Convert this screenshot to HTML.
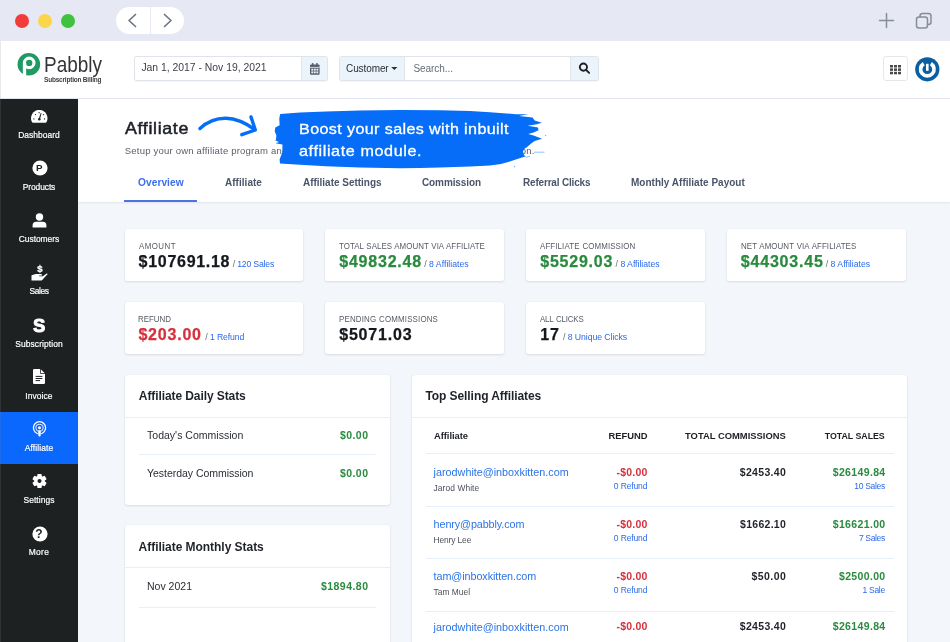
<!DOCTYPE html>
<html lang="en">
<head>
<meta charset="utf-8">
<title>Pabbly Subscription Billing - Affiliate</title>
<style>
*{box-sizing:border-box;margin:0;padding:0}
html,body{width:950px;height:642px;overflow:hidden;background:#f3f6fa;font-family:"Liberation Sans",sans-serif;color:#1f2329}
.abs{position:absolute}
#win{will-change:transform;position:relative;width:950px;height:642px;overflow:hidden;background:#f3f6fa}
/* title bar */
#tbar{left:0;top:0;width:950px;height:41px;background:#e6e8f3}
.dot{width:14px;height:14px;border-radius:50%;top:14px}
#pill{left:116px;top:7px;width:68px;height:27px;border-radius:14px;background:#fff}
#pill i{position:absolute;left:34px;top:0;width:1px;height:27px;background:#e6e8f3}
/* header */
#hdr{left:0;top:41px;width:950px;height:58px;background:#fff;border-bottom:1px solid #e3e6f2}
.inp{border:1px solid #dfe3ea;border-radius:2.500px;box-shadow:0 1px 1px rgba(60,80,110,.06);background:#fff;height:25px;top:56px}
.lb{background:#ebf3fb}
/* sidebar */
#side{left:0;top:99px;width:78px;height:543px;background:#1e2122}
.si{position:absolute;left:0;width:78px;height:52.2px;color:#fff;text-align:center}
.si svg{position:absolute}
.si.act{background:#0a68ff}
/* page head */
#phead{left:78px;top:99px;width:872px;height:103px;background:#fff;box-shadow:0 1px 2px rgba(0,0,0,.08)}
/* cards */
.card{position:absolute;width:178.700px;height:52px;background:#fff;border-radius:2.500px;box-shadow:0 1px 2.500px rgba(30,40,60,.11),0 0 1px rgba(30,40,60,.09)}
/* panels */
.panel{position:absolute;background:#fff;border-radius:3px;box-shadow:0 1px 2.500px rgba(30,40,60,.11),0 0 1px rgba(30,40,60,.09)}
.hl{position:absolute;height:1px;background:#e7f0fa}
.t{position:absolute;white-space:nowrap}
</style>
</head>
<body>
<div id="win">
  <div id="tbar" class="abs">
    <div class="abs dot" style="left:15px;background:#f23b3b"></div>
    <div class="abs dot" style="left:38px;background:#fbd54a"></div>
    <div class="abs dot" style="left:61px;background:#3fc33f"></div>
    <div id="pill" class="abs"><i></i>
      <svg class="abs" style="left:0;top:0" width="68" height="27" viewBox="0 0 68 27" fill="none" stroke="#6d7482" stroke-width="1.700" stroke-linecap="round" stroke-linejoin="round"><path d="M19.5 7.5 L13 13.5 L19.5 19.5"/><path d="M48.5 7.5 L55 13.5 L48.5 19.5"/></svg>
    </div>
    <svg class="abs" style="left:876px;top:10px" width="60" height="22" viewBox="0 0 60 22" fill="none" stroke="#888d9a" stroke-width="1.500" stroke-linecap="round"><path d="M10.5 3.5v14M3.5 10.5h14"/><rect x="40.5" y="7" width="11" height="11" rx="2.5"/><path d="M44 7V6a2.5 2.5 0 0 1 2.5-2.5h6A2.5 2.5 0 0 1 55 6v6a2.5 2.5 0 0 1-2.5 2.5h-1"/></svg>
  </div>

  <div id="hdr" class="abs"></div>
  <!-- logo -->
  <svg class="abs" style="left:17px;top:52px" width="24" height="25" viewBox="0 0 24 25"><circle cx="11.85" cy="12.25" r="11.3" fill="#1f9a62"/><path d="M7.5 25V10.9" fill="none" stroke="#fff" stroke-width="3.3"/><circle cx="12.2" cy="10.9" r="4.75" fill="none" stroke="#fff" stroke-width="3.1"/></svg>
  <!-- date -->
  <div class="abs inp" style="left:134px;width:194px"></div>
  <div class="abs lb" style="left:301px;top:57px;width:26px;height:23px;border-left:1px solid #e1e6ee;border-radius:0 2px 2px 0"></div>
  <svg class="abs" style="left:310px;top:62.800px" width="10" height="12" viewBox="0 0 10 12"><path d="M0 2.500a1 1 0 0 1 1-1h7.600a1 1 0 0 1 1 1V10.800a1 1 0 0 1-1 1H1a1 1 0 0 1-1-1z" fill="#555d6b"/><rect x="1.900" y="0" width="1.500" height="3" rx=".500" fill="#555d6b"/><rect x="6.200" y="0" width="1.500" height="3" rx=".500" fill="#555d6b"/><rect x="0" y="3.900" width="9.600" height=".800" fill="#ebf3fb"/><g fill="#ebf3fb"><rect x="1.300" y="5.700" width="1.900" height="1.900"/><rect x="3.850" y="5.700" width="1.900" height="1.900"/><rect x="6.400" y="5.700" width="1.900" height="1.900"/><rect x="1.300" y="8.400" width="1.900" height="1.900"/><rect x="3.850" y="8.400" width="1.900" height="1.900"/><rect x="6.400" y="8.400" width="1.900" height="1.900"/></g></svg>
  <!-- search -->
  <div class="abs inp" style="left:339px;width:260px"></div>
  <div class="abs lb" style="left:340px;top:57px;width:65px;height:23px;border-right:1px solid #e1e6ee;border-radius:2px 0 0 2px"></div>
  <div class="abs lb" style="left:570px;top:57px;width:28px;height:23px;border-left:1px solid #e1e6ee;border-radius:0 2px 2px 0"></div>
  <svg class="abs" style="left:391.400px;top:67px" width="7" height="4" viewBox="0 0 7 4"><path d="M0.200 0h6.200L3.300 3.100z" fill="#2b3037"/></svg>
  <svg class="abs" style="left:578.200px;top:61.800px" width="13" height="13" viewBox="0 0 13 13" fill="none" stroke="#1d2126" stroke-width="1.900"><circle cx="5.400" cy="5.100" r="3.600"/><path d="M8.100 7.900l3 3" stroke-linecap="round"/></svg>
  <!-- right icons -->
  <div class="abs" style="left:883px;top:56px;width:25px;height:25px;border:1px solid #e4e7ec;border-radius:3px;background:#fff"></div>
  <svg class="abs" style="left:890px;top:64.600px" width="11" height="10" viewBox="0 0 11 10" fill="#4a4846"><rect x="0" y="0" width="3" height="2.500"/><rect x="4" y="0" width="3" height="2.500"/><rect x="8" y="0" width="3" height="2.500"/><rect x="0" y="3.400" width="3" height="2.500"/><rect x="4" y="3.400" width="3" height="2.500"/><rect x="8" y="3.400" width="3" height="2.500"/><rect x="0" y="6.800" width="3" height="2.500"/><rect x="4" y="6.800" width="3" height="2.500"/><rect x="8" y="6.800" width="3" height="2.500"/></svg>
  <svg class="abs" style="left:915px;top:56.700px" width="25" height="25" viewBox="0 0 25 25"><circle cx="12.300" cy="12.300" r="12.100" fill="#0b5fa0"/><path d="M8.700 6.600A6.700 6.700 0 1 0 15.900 6.600" fill="none" stroke="#fff" stroke-width="3.700" stroke-linecap="butt"/><path d="M12.300 6.800v7" stroke="#fff" stroke-width="2.600"/></svg>

  <div id="side" class="abs">
    <div class="si" style="top:0px">
      <svg style="left:31px;top:10.5px" width="17" height="13" viewBox="0 0 17 13"><path d="M1.700 12.700L0.950 12A8.250 8.250 0 1 1 15.550 12L14.800 12.700z" fill="#fff"/><g fill="#1e2122"><circle cx="8.100" cy="2.700" r=".650"/><circle cx="4.500" cy="4.600" r=".650"/><circle cx="12.400" cy="4.600" r=".650"/><circle cx="2.900" cy="8.900" r=".650"/><circle cx="13.500" cy="8.900" r=".650"/><circle cx="8.300" cy="9.300" r="1.250"/><path d="M7.700 9.100L9.700 3L10.500 3.250L8.900 9.500z"/></g></svg></div>
    <div class="si" style="top:52.2px">
      <svg style="left:31.5px;top:9px" width="16" height="16" viewBox="0 0 16 16"><circle cx="8" cy="8" r="7.6" fill="#fff"/></svg></div>
    <div class="si" style="top:104.4px">
      <svg style="left:32px;top:9.5px" width="15" height="15" viewBox="0 0 15 15" fill="#fff"><circle cx="7.5" cy="4" r="3.7"/><path d="M0.6 14.5v-2.2A3.6 3.6 0 0 1 4.2 8.7h6.6a3.6 3.6 0 0 1 3.6 3.6v2.2z"/></svg></div>
    <div class="si" style="top:156.6px">
      <svg style="left:31px;top:9.4px" width="17" height="16" viewBox="0 0 17 16" fill="#fff"><path d="M0.500 10.300L4.800 9H9.700Q11.100 9 11.100 10.100V10.500H8.200V11.300H11.800L15.300 8.800Q16.300 8.300 16.700 9.100L11.200 14.900Q10.700 15.400 9.900 15.400H0.500z"/></svg></div>
    <div class="si" style="top:208.8px"></div>
    <div class="si" style="top:261px">
      <svg style="left:33px;top:9px" width="12" height="15" viewBox="0 0 12 15"><path d="M1.200 0h6.300L12 4.500v9.300a1.200 1.200 0 0 1-1.200 1.200H1.200A1.200 1.200 0 0 1 0 13.800V1.200A1.200 1.200 0 0 1 1.200 0z" fill="#fff"/><path d="M7.500 0v4.500H12" fill="none" stroke="#1e2122" stroke-width=".8"/><path d="M2.600 7.400h6.800M2.600 9.500h6.800M2.600 11.600h4.500" stroke="#1e2122" stroke-width="1"/></svg></div>
    <div class="si act" style="top:313.2px">
      <svg style="left:31.700px;top:9px" width="15" height="16" viewBox="0 0 15 16" fill="none" stroke="#fff"><circle cx="7.500" cy="6.800" r="6.100" stroke-width="1.300"/><circle cx="7.500" cy="6.800" r="3.600" stroke-width="1.100" stroke-opacity=".85"/><circle cx="7.500" cy="6.800" r="1.500" fill="#fff" stroke="none"/><path d="M5.900 9h3.200l-.2 5.300a1.400 1.400 0 0 1-2.800 0z" fill="#fff" stroke="#0a68ff" stroke-width=".400"/></svg></div>
    <div class="si" style="top:365.4px">
      <svg style="left:31.700px;top:8.500px" width="15" height="16" viewBox="-7.500 -8 15 16"><g fill="#fff"><circle r="5.400"/><g id="tooth"><rect x="-2.200" y="-7.100" width="4.400" height="4" rx=".900"/></g><use href="#tooth" transform="rotate(60)"/><use href="#tooth" transform="rotate(120)"/><use href="#tooth" transform="rotate(180)"/><use href="#tooth" transform="rotate(240)"/><use href="#tooth" transform="rotate(300)"/></g><circle r="2" fill="#1e2122"/></svg></div>
    <div class="si" style="top:417.6px">
      <svg style="left:31.500px;top:9px" width="16" height="16" viewBox="0 0 16 16"><circle cx="8" cy="8" r="7.600" fill="#fff"/></svg></div>
  </div>

  <div id="phead" class="abs"></div>
  <div class="t" id="h1" style="top:120.00px;font-size:16.5px;line-height:1;color:#1c1f24;letter-spacing:0.611px;left:124.80px;transform:scaleX(1.0800);transform-origin:0 0;-webkit-text-stroke:.5px #1c1f24;">Affiliate</div>
  <div class="t" id="sub" style="top:146.00px;font-size:9.5px;line-height:1;color:#5a6069;letter-spacing:0.208px;left:124.80px;">Setup your own affiliate program and let affiliates promote your products to earn commission.</div>
  <!-- arrow -->
  <svg class="abs" style="left:192px;top:108px" width="80" height="34" viewBox="192 108 80 34" fill="none" stroke="#056df8" stroke-width="3.400" stroke-linecap="round" stroke-linejoin="round"><path d="M200 128.600C208 121 218 118.200 226 118.300C236 118.600 247 124 254.500 129.300"/><path d="M251 116.900L255.300 130L241.800 134.700"/></svg>
  <!-- brush -->
  <svg class="abs" style="left:270px;top:106px" width="284" height="66" viewBox="270 106 284 66"><path fill="#056df8" d="M280.2 114 L300 112.6 L326 111.4 L360 110.6 L400 110 L440 110.2 L470 111 L490 112.2 L516.2 114.2 L528.2 114.2 L519 116 L532.5 117.6 L534.7 120.4 L541.8 122.8 L536.9 124.2 L527.6 125.8 L538 127.4 L538.5 130.2 L533.6 132.6 L528.2 134 L533.6 135.6 L542.1 138.7 L534.7 141.1 L531.4 143.3 L527.1 147.1 L524.2 148.9 L523 151.5 L524 155.3 L526 156.3 L517.3 159.1 L510.7 161.2 L500.9 164 L490 165.6 L470 166.4 L440 167.6 L420 168 L400 168.2 L360 167.4 L326 166.2 L300 164.8 L280 163.5 L279.6 159.6 L282.4 152 L282.4 144.6 L275.5 143.2 L279 142 L275.5 140.6 L276 138.9 L276.4 135.6 L274.7 131.3 L275.3 127.5 L279.6 125.3 L279.3 118.2Z"/><path d="M534 152.200H544.500M526 157.400l4-1.200" stroke="#056df8" stroke-width=".800" stroke-opacity=".55" fill="none"/><circle cx="545.600" cy="135.600" r=".700" fill="#056df8" fill-opacity=".6"/><circle cx="514.500" cy="166.700" r=".600" fill="#056df8" fill-opacity=".6"/></svg>
  <!-- tabs -->
  <div class="abs" style="left:124px;top:199.500px;width:73px;height:2.500px;background:#4c74de"></div>

  <div class="card" style="left:124.500px;top:229px"></div>
  <div class="card" style="left:325.400px;top:229px"></div>
  <div class="card" style="left:526.300px;top:229px"></div>
  <div class="card" style="left:727.100px;top:229px"></div>
  <div class="card" style="left:124.500px;top:302px"></div>
  <div class="card" style="left:325.400px;top:302px"></div>
  <div class="card" style="left:526.300px;top:302px"></div>

  <!-- daily stats -->
  <div class="panel" style="left:124.500px;top:375px;width:265.500px;height:129.500px">
    <div class="hl" style="left:0;top:42px;width:265.500px"></div>
    <div class="hl" style="left:14px;top:79px;width:237.500px"></div>
  </div>
  <!-- monthly stats -->
  <div class="panel" style="left:124.500px;top:525.200px;width:265.500px;height:140px">
    <div class="hl" style="left:0;top:42px;width:265.500px"></div>
    <div class="hl" style="left:14px;top:81.500px;width:237.500px"></div>
  </div>
  <!-- top selling -->
  <div class="panel" style="left:412px;top:375px;width:495.400px;height:300px">
    <div class="hl" style="left:0;top:42px;width:495px"></div>
    <div class="hl" style="left:14px;top:78px;width:467.500px"></div>
    <div class="hl" style="left:14px;top:130.500px;width:467.500px"></div>
    <div class="hl" style="left:14px;top:183px;width:467.500px"></div>
    <div class="hl" style="left:14px;top:236px;width:467.500px"></div>
  </div>
  <div class="abs" style="left:0;top:41px;width:1px;height:601px;background:rgba(130,132,145,.18)"></div>
  <div class="t" id="lg1" style="top:55.00px;font-size:21.5px;line-height:1;color:#333539;left:44.30px;transform:scaleX(0.8821);transform-origin:0 0;">Pabbly</div>
  <div class="t" id="lg2" style="top:77.00px;font-size:6.5px;line-height:1;color:#3a3d42;font-weight:700;letter-spacing:-0.205px;left:44.00px;">Subscription Billing</div>
  <div class="t" id="dt" style="top:63.00px;font-size:10.4px;line-height:1;color:#3a3f47;letter-spacing:-0.006px;left:141.40px;">Jan 1, 2017 - Nov 19, 2021</div>
  <div class="t" id="cu" style="top:64.00px;font-size:10px;line-height:1;color:#2b3037;letter-spacing:-0.094px;left:346.00px;">Customer</div>
  <div class="t" id="se" style="top:64.00px;font-size:10px;line-height:1;color:#666d78;letter-spacing:-0.066px;left:413.50px;">Search...</div>
  <div class="t" id="b1" style="top:122.00px;font-size:14.8px;line-height:1;color:#fff;letter-spacing:0.343px;left:299.00px;transform:scaleX(1.0900);transform-origin:0 0;-webkit-text-stroke:.3px #fff;">Boost your sales with inbuilt</div>
  <div class="t" id="b2" style="top:144.00px;font-size:14.8px;line-height:1;color:#fff;letter-spacing:0.563px;left:299.00px;transform:scaleX(1.0900);transform-origin:0 0;-webkit-text-stroke:.3px #fff;">affiliate module.</div>
  <div class="t" id="t1" style="top:177.00px;font-size:10.5px;line-height:1;color:#3d6fe8;font-weight:700;letter-spacing:0.044px;left:137.90px;transform:scaleX(0.9700);transform-origin:0 0;">Overview</div>
  <div class="t" id="t2" style="top:177.00px;font-size:10.5px;line-height:1;color:#4a5568;font-weight:700;letter-spacing:0.041px;left:225.00px;transform:scaleX(0.9500);transform-origin:0 0;">Affiliate</div>
  <div class="t" id="t3" style="top:177.00px;font-size:10.5px;line-height:1;color:#4a5568;font-weight:700;letter-spacing:-0.012px;left:302.90px;transform:scaleX(0.9500);transform-origin:0 0;">Affiliate Settings</div>
  <div class="t" id="t4" style="top:177.00px;font-size:10.5px;line-height:1;color:#4a5568;font-weight:700;letter-spacing:-0.101px;left:422.00px;transform:scaleX(0.9500);transform-origin:0 0;">Commission</div>
  <div class="t" id="t5" style="top:177.00px;font-size:10.5px;line-height:1;color:#4a5568;font-weight:700;letter-spacing:-0.178px;left:522.50px;transform:scaleX(0.9500);transform-origin:0 0;">Referral Clicks</div>
  <div class="t" id="t6" style="top:177.00px;font-size:10.5px;line-height:1;color:#4a5568;font-weight:700;letter-spacing:0.025px;left:631.00px;transform:scaleX(0.9500);transform-origin:0 0;">Monthly Affiliate Payout</div>
  <div class="t" id="c1l" style="top:242.00px;font-size:8.8px;line-height:1;color:#555b63;letter-spacing:0.486px;left:138.60px;transform:scaleX(0.9000);transform-origin:0 0;word-spacing:.6px;">AMOUNT</div>
  <div class="t" id="c1v" style="top:254.00px;font-size:16px;line-height:1;color:#15181c;font-weight:700;letter-spacing:0.708px;left:138.60px;-webkit-text-stroke:.25px #15181c;">$107691.18</div>
  <div class="t" id="c1s" style="top:260.00px;font-size:8.7px;line-height:1;color:#2b69ea;letter-spacing:-0.187px;left:232.70px;"><span style="color:#666c75">/ </span>120 Sales</div>
  <div class="t" id="c2l" style="top:242.00px;font-size:8.8px;line-height:1;color:#555b63;letter-spacing:0.023px;left:339.20px;transform:scaleX(0.9000);transform-origin:0 0;word-spacing:.6px;">TOTAL SALES AMOUNT VIA AFFILIATE</div>
  <div class="t" id="c2v" style="top:254.00px;font-size:16px;line-height:1;color:#2a8a3e;font-weight:700;letter-spacing:0.795px;left:339.20px;-webkit-text-stroke:.25px #2a8a3e;">$49832.48</div>
  <div class="t" id="c2s" style="top:260.00px;font-size:8.7px;line-height:1;color:#2b69ea;letter-spacing:0.017px;left:424.20px;"><span style="color:#666c75">/ </span>8 Affiliates</div>
  <div class="t" id="c3l" style="top:242.00px;font-size:8.8px;line-height:1;color:#555b63;letter-spacing:0.122px;left:540.30px;transform:scaleX(0.9000);transform-origin:0 0;word-spacing:.6px;">AFFILIATE COMMISSION</div>
  <div class="t" id="c3v" style="top:254.00px;font-size:16px;line-height:1;color:#2a8a3e;font-weight:700;letter-spacing:0.752px;left:540.30px;-webkit-text-stroke:.25px #2a8a3e;">$5529.03</div>
  <div class="t" id="c3s" style="top:260.00px;font-size:8.7px;line-height:1;color:#2b69ea;letter-spacing:-0.022px;left:615.60px;"><span style="color:#666c75">/ </span>8 Affiliates</div>
  <div class="t" id="c4l" style="top:242.00px;font-size:8.8px;line-height:1;color:#555b63;letter-spacing:0.085px;left:740.80px;transform:scaleX(0.9000);transform-origin:0 0;word-spacing:.6px;">NET AMOUNT VIA AFFILIATES</div>
  <div class="t" id="c4v" style="top:254.00px;font-size:16px;line-height:1;color:#2a8a3e;font-weight:700;letter-spacing:0.807px;left:740.80px;-webkit-text-stroke:.25px #2a8a3e;">$44303.45</div>
  <div class="t" id="c4s" style="top:260.00px;font-size:8.7px;line-height:1;color:#2b69ea;letter-spacing:0.017px;left:825.70px;"><span style="color:#666c75">/ </span>8 Affiliates</div>
  <div class="t" id="c5l" style="top:315.00px;font-size:8.8px;line-height:1;color:#555b63;left:138.40px;transform:scaleX(0.9000);transform-origin:0 0;word-spacing:.6px;">REFUND</div>
  <div class="t" id="c5v" style="top:327.00px;font-size:16px;line-height:1;color:#d7303d;font-weight:700;letter-spacing:0.793px;left:138.40px;-webkit-text-stroke:.25px #d7303d;">$203.00</div>
  <div class="t" id="c5s" style="top:333.00px;font-size:8.7px;line-height:1;color:#2b69ea;letter-spacing:-0.110px;left:205.30px;"><span style="color:#666c75">/ </span>1 Refund</div>
  <div class="t" id="c6l" style="top:315.00px;font-size:8.8px;line-height:1;color:#555b63;letter-spacing:0.179px;left:339.20px;transform:scaleX(0.9000);transform-origin:0 0;word-spacing:.6px;">PENDING COMMISSIONS</div>
  <div class="t" id="c6v" style="top:327.00px;font-size:16px;line-height:1;color:#15181c;font-weight:700;letter-spacing:0.809px;left:339.20px;-webkit-text-stroke:.25px #15181c;">$5071.03</div>
  <div class="t" id="c7l" style="top:315.00px;font-size:8.8px;line-height:1;color:#555b63;letter-spacing:-0.178px;left:540.30px;transform:scaleX(0.9000);transform-origin:0 0;word-spacing:.6px;">ALL CLICKS</div>
  <div class="t" id="c7v" style="top:327.00px;font-size:16px;line-height:1;color:#15181c;font-weight:700;letter-spacing:0.703px;left:540.30px;-webkit-text-stroke:.25px #15181c;">17</div>
  <div class="t" id="c7s" style="top:333.00px;font-size:8.7px;line-height:1;color:#2b69ea;letter-spacing:-0.062px;left:563.00px;"><span style="color:#666c75">/ </span>8 Unique Clicks</div>
  <div class="t" id="p1h" style="top:390.00px;font-size:12px;line-height:1;color:#1f2329;font-weight:700;letter-spacing:-0.085px;left:138.80px;">Affiliate Daily Stats</div>
  <div class="t" id="p2h" style="top:541.00px;font-size:12px;line-height:1;color:#1f2329;font-weight:700;letter-spacing:-0.037px;left:138.60px;">Affiliate Monthly Stats</div>
  <div class="t" id="p3h" style="top:390.00px;font-size:12px;line-height:1;color:#1f2329;font-weight:700;letter-spacing:-0.069px;left:425.40px;">Top Selling Affiliates</div>
  <div class="t" id="r1" style="top:430.00px;font-size:11.2px;line-height:1;color:#2a2e35;letter-spacing:0.012px;left:146.80px;transform:scaleX(0.9400);transform-origin:0 0;">Today's Commission</div>
  <div class="t" id="r2" style="top:468.00px;font-size:11.2px;line-height:1;color:#2a2e35;letter-spacing:-0.043px;left:147.00px;transform:scaleX(0.9400);transform-origin:0 0;">Yesterday Commission</div>
  <div class="t" id="r3" style="top:581.00px;font-size:11.2px;line-height:1;color:#2a2e35;letter-spacing:-0.005px;left:147.00px;transform:scaleX(0.9400);transform-origin:0 0;">Nov 2021</div>
  <div class="t" id="a1" style="top:430.00px;font-size:10.5px;line-height:1;color:#2a8a3e;font-weight:700;letter-spacing:0.455px;right:581.55px;">$0.00</div>
  <div class="t" id="a2" style="top:468.00px;font-size:10.5px;line-height:1;color:#2a8a3e;font-weight:700;letter-spacing:0.455px;right:581.55px;">$0.00</div>
  <div class="t" id="a3" style="top:581.00px;font-size:10.5px;line-height:1;color:#2a8a3e;font-weight:700;letter-spacing:0.472px;right:581.53px;">$1894.80</div>
  <div class="t" id="th1" style="top:431.00px;font-size:9.4px;line-height:1;color:#1c1f24;font-weight:700;letter-spacing:-0.049px;left:434.00px;">Affiliate</div>
  <div class="t" id="th2" style="top:431.00px;font-size:9.4px;line-height:1;color:#1c1f24;font-weight:700;letter-spacing:-0.053px;right:302.65px;">REFUND</div>
  <div class="t" id="th3" style="top:431.00px;font-size:9.4px;line-height:1;color:#1c1f24;font-weight:700;letter-spacing:0.017px;right:164.18px;">TOTAL COMMISSIONS</div>
  <div class="t" id="th4" style="top:431.00px;font-size:9.4px;line-height:1;color:#1c1f24;font-weight:700;letter-spacing:-0.035px;right:64.84px;transform:scaleX(0.9400);transform-origin:100% 0;">TOTAL SALES</div>
  <div class="t" id="e0" style="top:467.00px;font-size:10.8px;line-height:1;color:#2c74e4;letter-spacing:-0.004px;left:433.60px;">jarodwhite@inboxkitten.com</div>
  <div class="t" id="n0" style="top:484.00px;font-size:8.4px;line-height:1;color:#4a4f57;letter-spacing:0.091px;left:433.60px;">Jarod White</div>
  <div class="t" id="rf0" style="top:467.00px;font-size:10.5px;line-height:1;color:#d7303d;font-weight:700;letter-spacing:0.224px;right:302.38px;">-$0.00</div>
  <div class="t" id="rl0" style="top:482.00px;font-size:8.5px;line-height:1;color:#2b69ea;letter-spacing:-0.129px;right:302.73px;">0 Refund</div>
  <div class="t" id="cm0" style="top:467.00px;font-size:10.5px;line-height:1;color:#1f2329;font-weight:700;letter-spacing:0.315px;right:163.89px;">$2453.40</div>
  <div class="t" id="sa0" style="top:467.00px;font-size:10.5px;line-height:1;color:#2a8a3e;font-weight:700;letter-spacing:0.357px;right:64.44px;">$26149.84</div>
  <div class="t" id="sl0" style="top:482.00px;font-size:8.5px;line-height:1;color:#2b69ea;letter-spacing:-0.299px;right:65.10px;">10 Sales</div>
  <div class="t" id="e1" style="top:519.00px;font-size:10.8px;line-height:1;color:#2c74e4;letter-spacing:-0.106px;left:433.60px;">henry@pabbly.com</div>
  <div class="t" id="n1" style="top:536.00px;font-size:8.4px;line-height:1;color:#4a4f57;letter-spacing:-0.118px;left:433.60px;">Henry Lee</div>
  <div class="t" id="rf1" style="top:519.00px;font-size:10.5px;line-height:1;color:#d7303d;font-weight:700;letter-spacing:0.224px;right:302.38px;">-$0.00</div>
  <div class="t" id="rl1" style="top:534.00px;font-size:8.5px;line-height:1;color:#2b69ea;letter-spacing:-0.129px;right:302.73px;">0 Refund</div>
  <div class="t" id="cm1" style="top:519.00px;font-size:10.5px;line-height:1;color:#1f2329;font-weight:700;letter-spacing:0.286px;right:163.91px;">$1662.10</div>
  <div class="t" id="sa1" style="top:519.00px;font-size:10.5px;line-height:1;color:#2a8a3e;font-weight:700;letter-spacing:0.357px;right:64.44px;">$16621.00</div>
  <div class="t" id="sl1" style="top:534.00px;font-size:8.5px;line-height:1;color:#2b69ea;letter-spacing:-0.360px;right:65.16px;">7 Sales</div>
  <div class="t" id="e2" style="top:571.00px;font-size:10.8px;line-height:1;color:#2c74e4;letter-spacing:-0.077px;left:433.60px;">tam@inboxkitten.com</div>
  <div class="t" id="n2" style="top:588.00px;font-size:8.4px;line-height:1;color:#4a4f57;letter-spacing:0.027px;left:433.60px;">Tam Muel</div>
  <div class="t" id="rf2" style="top:571.00px;font-size:10.5px;line-height:1;color:#d7303d;font-weight:700;letter-spacing:0.224px;right:302.38px;">-$0.00</div>
  <div class="t" id="rl2" style="top:586.00px;font-size:8.5px;line-height:1;color:#2b69ea;letter-spacing:-0.129px;right:302.73px;">0 Refund</div>
  <div class="t" id="cm2" style="top:571.00px;font-size:10.5px;line-height:1;color:#1f2329;font-weight:700;letter-spacing:0.435px;right:163.77px;">$50.00</div>
  <div class="t" id="sa2" style="top:571.00px;font-size:10.5px;line-height:1;color:#2a8a3e;font-weight:700;letter-spacing:0.343px;right:64.46px;">$2500.00</div>
  <div class="t" id="sl2" style="top:586.00px;font-size:8.5px;line-height:1;color:#2b69ea;letter-spacing:-0.282px;right:65.08px;">1 Sale</div>
  <div class="t" id="e3" style="top:622.00px;font-size:10.8px;line-height:1;color:#2c74e4;letter-spacing:-0.004px;left:433.60px;">jarodwhite@inboxkitten.com</div>
  <div class="t" id="rf3" style="top:621.00px;font-size:10.5px;line-height:1;color:#d7303d;font-weight:700;letter-spacing:0.224px;right:302.38px;">-$0.00</div>
  <div class="t" id="cm3" style="top:621.00px;font-size:10.5px;line-height:1;color:#1f2329;font-weight:700;letter-spacing:0.315px;right:163.89px;">$2453.40</div>
  <div class="t" id="sa3" style="top:621.00px;font-size:10.5px;line-height:1;color:#2a8a3e;font-weight:700;letter-spacing:0.357px;right:64.44px;">$26149.84</div>
  <div class="t" id="s0" style="top:130.00px;font-size:9.4px;line-height:1;color:#fff;letter-spacing:0.030px;left:-60.89px;width:200px;text-align:center;transform:scaleX(0.9000);transform-origin:50% 0;-webkit-text-stroke:.2px #fff;">Dashboard</div>
  <div class="t" id="s1" style="top:182.00px;font-size:9.4px;line-height:1;color:#fff;letter-spacing:-0.111px;left:-60.96px;width:200px;text-align:center;transform:scaleX(0.9000);transform-origin:50% 0;-webkit-text-stroke:.2px #fff;">Products</div>
  <div class="t" id="s2" style="top:234.00px;font-size:9.4px;line-height:1;color:#fff;letter-spacing:-0.041px;left:-60.92px;width:200px;text-align:center;transform:scaleX(0.9000);transform-origin:50% 0;-webkit-text-stroke:.2px #fff;">Customers</div>
  <div class="t" id="s3" style="top:286.00px;font-size:9.4px;line-height:1;color:#fff;letter-spacing:-0.474px;left:-61.14px;width:200px;text-align:center;transform:scaleX(0.9000);transform-origin:50% 0;-webkit-text-stroke:.2px #fff;">Sales</div>
  <div class="t" id="s4" style="top:339.00px;font-size:9.4px;line-height:1;color:#fff;letter-spacing:0.098px;left:-60.85px;width:200px;text-align:center;transform:scaleX(0.9000);transform-origin:50% 0;-webkit-text-stroke:.2px #fff;">Subscription</div>
  <div class="t" id="s5" style="top:391.00px;font-size:9.4px;line-height:1;color:#fff;letter-spacing:0.084px;left:-60.86px;width:200px;text-align:center;transform:scaleX(0.9000);transform-origin:50% 0;-webkit-text-stroke:.2px #fff;">Invoice</div>
  <div class="t" id="s6" style="top:443.00px;font-size:9.4px;line-height:1;color:#fff;letter-spacing:0.136px;left:-60.83px;width:200px;text-align:center;transform:scaleX(0.9000);transform-origin:50% 0;-webkit-text-stroke:.2px #fff;">Affiliate</div>
  <div class="t" id="s7" style="top:495.00px;font-size:9.4px;line-height:1;color:#fff;letter-spacing:0.050px;left:-60.88px;width:200px;text-align:center;transform:scaleX(0.9000);transform-origin:50% 0;-webkit-text-stroke:.2px #fff;">Settings</div>
  <div class="t" id="s8" style="top:547.00px;font-size:9.4px;line-height:1;color:#fff;letter-spacing:0.362px;left:-60.72px;width:200px;text-align:center;transform:scaleX(0.9000);transform-origin:50% 0;-webkit-text-stroke:.2px #fff;">More</div>
  <div class="t" id="gP" style="top:163.00px;font-size:9.8px;line-height:1;color:#1e2122;font-weight:700;left:-60.80px;width:200px;text-align:center;">P</div>
  <div class="t" id="gD" style="top:264.00px;font-size:9.5px;line-height:1;color:#fff;font-weight:700;left:-60.20px;width:200px;text-align:center;-webkit-text-stroke:.3px #fff;">$</div>
  <div class="t" id="gS" style="top:317.00px;font-size:18.5px;line-height:1;color:#fff;font-weight:700;left:-60.80px;width:200px;text-align:center;-webkit-text-stroke:.9px #fff;">S</div>
  <div class="t" id="gQ" style="top:528.00px;font-size:12px;line-height:1;color:#1e2122;font-weight:700;left:-61.00px;width:200px;text-align:center;">?</div>
</div>
</body>
</html>
